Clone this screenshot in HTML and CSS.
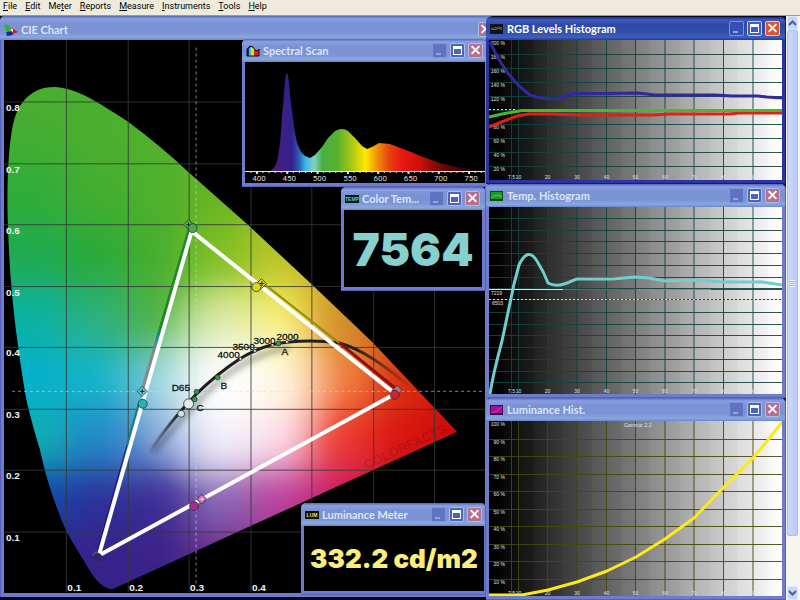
FILE: index.html
```html
<!DOCTYPE html>
<html lang="en">
<head>
<meta charset="utf-8">
<title>CIE Chart</title>
<link rel="stylesheet" href="styles.css">
</head>
<body>
<nav class="menubar">
  <button><u>F</u>ile</button>
  <button><u>E</u>dit</button>
  <button>Me<u>t</u>er</button>
  <button><u>R</u>eports</button>
  <button><u>M</u>easure</button>
  <button><u>I</u>nstruments</button>
  <button><u>T</u>ools</button>
  <button><u>H</u>elp</button>
</nav>

<div class="workspace">
  <main class="desktop">
    <div class="stage">
      <section class="window cie">
        <header class="titlebar">
          <svg class="icon" viewBox="0 0 14 12"><path d="M0 1Q4-1 7 4L9 7 2 7Z" fill="#3fae30"/><path d="M8 4L14 8 9 10Z" fill="#e01810"/><path d="M2 8L8 7 9 11 3 12Z" fill="#1c2890"/><path d="M6 6L9 5 9 8Z" fill="#fff"/></svg>
          <h2>CIE Chart</h2>
          <button class="ctl close" aria-label="Close"></button>
        </header>
        <svg class="plot" viewBox="4 40 482 553">
          <defs>
            <clipPath id="locus"><path d="M112 590C100 588 92 575 85 563L67 533C55 506 46 478 40 450C34 430 29 412 26 398C18 350 11 300 8.500 240C7 210 7 180 9 155C12 120 16 110 24 100C33 90 43 86 56 86.500C78 88 100 103 128 121C150 137 170 154 189 172L250 226 312 284 373 342 458 432Z"/></clipPath>
            <clipPath id="gamut"><path d="M192 229L99 557 396 394Z"/></clipPath>
            <filter id="blend" x="-20%" y="-20%" width="140%" height="140%" color-interpolation-filters="sRGB"><feGaussianBlur stdDeviation="19"/></filter>
            <filter id="soft" x="-20%" y="-20%" width="140%" height="140%"><feGaussianBlur stdDeviation="3"/></filter>
            <radialGradient id="glow" gradientUnits="userSpaceOnUse" cx="230" cy="388" r="115"><stop offset="0" stop-color="#fff" stop-opacity=".9"/><stop offset=".4" stop-color="#fff" stop-opacity=".45"/><stop offset="1" stop-color="#fff" stop-opacity="0"/></radialGradient>
            <linearGradient id="fade" gradientUnits="userSpaceOnUse" x1="148" y1="0" x2="410" y2="0"><stop offset="0" stop-color="#222" stop-opacity="0"/><stop offset=".12" stop-color="#1c1c1c"/><stop offset=".8" stop-color="#222"/><stop offset="1" stop-color="#311" stop-opacity=".1"/></linearGradient>
            <linearGradient id="edge" x1="0" y1="0" x2="0" y2="1"><stop offset="0" stop-color="#1f8a24"/><stop offset=".6" stop-color="#1f8a24"/><stop offset=".65" stop-color="#14888c"/><stop offset=".75" stop-color="#888"/><stop offset="1" stop-color="#889"/></linearGradient>
          </defs>
          <rect x="4" y="40" width="482" height="553" fill="#000"/>
          <g clip-path="url(#locus)">
            <g id="field" filter="url(#blend)"></g>
            <g clip-path="url(#gamut)"><circle cx="230" cy="388" r="115" fill="url(#glow)"/></g>
            <text class="watermark" transform="translate(367 470) rotate(-25)">COLORFACTS</text>
          </g>
          <g id="cie-grid" class="cie-grid"></g>
          <path class="cross" d="M196.500 47V586M12 391.500H486"/>
          <path d="M154 452Q175 426 200 400Q240 356 290 347" class="curve-shadow" filter="url(#soft)"/>
          <path d="M150 453C162 433 180 412 197 394C211 380 225 369 240 359C258 348 273 343 290 342C310 340 325 341 340 343C366 350 390 370 409 385" class="curve" stroke="url(#fade)"/>
          <path d="M188.500 229L141.500 390 143 392 191 231Z" fill="url(#edge)" stroke="url(#edge)"/>
          <path d="M139 404L127 446" fill="none" stroke="#128078" stroke-width="2"/>
          <path d="M127 446L98 550" fill="none" stroke="#1c1468"/>
          <path d="M266 285L340 343" stroke="#8c8c10" stroke-width="2"/><path d="M340 343L397 389" stroke="#8c1010" stroke-width="3"/>
          <path class="gamut" d="M192 231L99 556 396 394Z"/>
          <g class="marks">
            <path fill="#54b848" d="M189 219.500l5 5-5 5-5-5z"/><path d="M186.500 224.500h5m-2.500-2.500v5" stroke="#123"/>
            <circle cx="193" cy="228" r="4.500" fill="#4ca84e"/>
            <path fill="#e0d030" d="M262 278.500l5 5-5 5-5-5z"/><path d="M260 283.500h5m-2.500-2.500v5" stroke="#332"/>
            <circle cx="257" cy="287" r="4.500" fill="#ded51c"/>
            <path fill="#66d0d4" d="M142.500 386.500l5 5-5 5-5-5z"/><path d="M140 391.500h5m-2.500-2.500v5" stroke="#123"/>
            <circle cx="143" cy="404" r="4.500" fill="#23b5ae"/>
            <path fill="#d86068" d="M398 385.500l5 5-5 5-5-5z"/><circle cx="395.500" cy="395" r="4.500" fill="#d42030"/>
            <path fill="#c468b4" d="M202 494.500l5 5-5 5-5-5z"/><path d="M200 499.500h5m-2.500-2.500v5" stroke="#ecd"/>
            <circle cx="194.500" cy="506.500" r="4.500" fill="#a92a92"/>
            <path fill="#5a5aaa" fill-opacity=".6" stroke="#88a" stroke-dasharray="1 1" d="M96 551l4 4-4 4-4-4z"/><circle cx="98" cy="558" r="4" fill="#352070"/>
            <circle cx="189" cy="404" r="5" fill="#e8e8e8"/><circle cx="181.500" cy="414" r="3.500" fill="#ddd"/>
            <circle cx="197" cy="392" r="2.500" fill="#2fa32f"/><circle cx="195" cy="399.500" r="2.500" fill="#2fa32f"/><circle cx="218" cy="377.500" r="2.500" fill="#2fa32f"/><circle cx="279" cy="343.500" r="2.500" fill="#2fa32f"/>
            <circle cx="241" cy="359" r="1.500" fill="#eee"/><circle cx="255.500" cy="351" r="1.500" fill="#eee"/><circle cx="273" cy="345" r="1.500" fill="#eee"/><circle cx="287.500" cy="342" r="1.500" fill="#eee"/>
          </g>
          <g class="note"><text x="172" y="391">D65</text><text x="218" y="358">4000</text><text x="233" y="350">3500</text><text x="254" y="344">3000</text><text x="277" y="340">2000</text><text x="282" y="355">A</text><text x="221" y="389">B</text><text x="197" y="411">C</text></g>
        </svg>
      </section>

      <section class="window spectral">
        <header class="titlebar">
          <svg class="icon" viewBox="0 0 14 12"><path d="M1 11V4L4 1 6 1V11Z" fill="#1c2068"/><path d="M3 11V3L5 2V11Z" fill="#38c0e0"/><path d="M5 11V2L8 3V11Z" fill="#d8e020"/><path d="M8 11V5L11 6 13 5V11Z" fill="#e02010"/><path d="M1 11V4L4 1 7 2 9 5 11 6 13 4V11Z" fill="none" stroke="#111"/></svg>
          <h2>Spectral Scan</h2>
          <button class="ctl min" aria-label="Minimize"></button><button class="ctl max" aria-label="Maximize"></button><button class="ctl close" aria-label="Close"></button>
        </header>
        <svg class="plot" viewBox="0 0 240 121">
          <defs><linearGradient id="spectrum" gradientUnits="userSpaceOnUse" x1="25" y1="0" x2="235" y2="0">
            <stop offset="0" stop-color="#501870"/><stop offset=".06" stop-color="#3c2088"/><stop offset=".105" stop-color="#34208c"/><stop offset=".14" stop-color="#3060b8"/><stop offset=".17" stop-color="#38b8e8"/><stop offset=".21" stop-color="#88d0c0"/><stop offset=".25" stop-color="#48b040"/><stop offset=".32" stop-color="#58b030"/><stop offset=".4" stop-color="#b8cc10"/><stop offset=".455" stop-color="#ffea00"/><stop offset=".51" stop-color="#f09008"/><stop offset=".57" stop-color="#e84010"/><stop offset=".63" stop-color="#e81810"/><stop offset=".71" stop-color="#d01008"/><stop offset=".8" stop-color="#780808"/><stop offset="1" stop-color="#100000"/></linearGradient></defs>
          <rect width="240" height="121"/>
          <path fill="url(#spectrum)" d="M25 109C30 106 32 101 33 95C35 85 36 70 37 55C39 38 40 11 42 11C44 11 45 38 47 48L49 66 52 81 56 90 60 94 65 96 70 93 77 85 83 76 90 69Q97 65 103 69L110 76 117 84 122 87 127 85 134 81 145 82 158 87 166 90 175 94 195 101 212 105 235 109Z"/>
          <g id="spectral-axis" class="spectral-axis"></g>
        </svg>
      </section>

      <section class="window color-temp">
        <header class="titlebar">
          <svg class="icon" viewBox="0 0 14 12"><rect y="2" width="14" height="8" fill="#001418"/><text x="7" y="8" class="tiny tiny-temp">TEMP</text></svg>
          <h2>Color Tem...</h2>
          <button class="ctl min" aria-label="Minimize"></button><button class="ctl max" aria-label="Maximize"></button><button class="ctl close" aria-label="Close"></button>
        </header>
        <output class="reading temp">7564</output>
      </section>

      <section class="window lum-meter">
        <header class="titlebar">
          <svg class="icon" viewBox="0 0 14 12"><rect y="2" width="14" height="8" fill="#141000"/><text x="7" y="8" class="tiny tiny-lum">LUM</text></svg>
          <h2>Luminance Meter</h2>
          <button class="ctl min" aria-label="Minimize"></button><button class="ctl max" aria-label="Maximize"></button><button class="ctl close" aria-label="Close"></button>
        </header>
        <output class="reading lum">332.2 cd/m2</output>
      </section>
    </div>

    <div class="column">
      <section class="window active">
        <header class="titlebar">
          <svg class="icon" viewBox="0 0 14 12"><rect y="1" width="13" height="10" fill="#0c1420"/><path d="M1 5Q4 8 7 6T12 5" stroke="#38a030" fill="none"/><path d="M1 7Q6 2 12 7" stroke="#c03030" fill="none"/></svg>
          <h2>RGB Levels Histogram</h2>
          <button class="ctl min" aria-label="Minimize"></button><button class="ctl max" aria-label="Maximize"></button><button class="ctl close" aria-label="Close"></button>
        </header>
        <svg class="plot" viewBox="0 0 293 140">
          <defs><linearGradient id="ramp"><stop offset="0" stop-color="#000"/><stop offset=".1" stop-color="#101010"/><stop offset=".5" stop-color="#7a7a7a"/><stop offset=".8" stop-color="#cacaca"/><stop offset="1" stop-color="#fff"/></linearGradient></defs>
          <g data-steps></g><g class="grid" data-grid="14"></g>
          <path d="M0 69.500H28" stroke="#ddd" stroke-dasharray="2 2"/>
          <g data-labels="200,180,160,140,120,,80,60,40,20" data-step="14"></g>
          <path class="line blue" d="M1 2L9 18 18 32 29 45 41 55 51 58 66 59 74 57 84 53.500 118 53.500 149 53 166 55 226 55 243 56 269 56 278 57 293 58"/>
          <path class="line red" d="M0 87L10 83 28 76 40 74 62 74 90 75 165 75 180 74 240 74 250 73 293 73"/>
          <path class="line green" d="M0 77L13 74 33 70.500 293 70.500"/>
        </svg>
      </section>

      <section class="window">
        <header class="titlebar">
          <svg class="icon" viewBox="0 0 14 12"><rect y="1" width="13" height="10" fill="#0b4a12"/><rect x="1" y="2" width="11" height="7" fill="#1d9a28"/><path d="M1 8Q6 3 12 7" stroke="#4ddc50" fill="none"/></svg>
          <h2>Temp. Histogram</h2>
          <button class="ctl min" aria-label="Minimize"></button><button class="ctl max" aria-label="Maximize"></button><button class="ctl close" aria-label="Close"></button>
        </header>
        <svg class="plot" viewBox="0 1 293 187">
          <g data-steps></g><g class="grid" data-grid="11.75" data-skip="8"></g>
          <path d="M0 83.500H74" stroke="#ddd"/><path d="M74 83.500H148" stroke="#666"/><path d="M148 83.500H222" stroke="#888"/><path d="M222 83.500H293" stroke="#444"/>
          <path d="M0 93.500H293" stroke="#243c3c"/><path d="M0 93.500H293" stroke="#ddd" stroke-dasharray="2 2"/>
          <g class="label"><text x="2" y="89">7219</text><text x="3" y="99">6503</text></g>
          <g data-labels=""></g>
          <path class="line cyan" d="M1 188C4 168 9 150 13 135L25 78 30 59Q39 40 48 55Q55 66 59 77Q66 81 75 78C80 77 84 74 88 73L124 73 146 71 160 72 176 75 208 74 234 76 273 76 293 79"/>
        </svg>
      </section>

      <section class="window">
        <header class="titlebar">
          <svg class="icon" viewBox="0 0 14 12"><rect y="1" width="13" height="10" fill="#420848"/><rect x="1" y="2" width="11" height="7" fill="#a0109c"/><path d="M1 9Q8 8 12 3" stroke="#c840c0" fill="none"/></svg>
          <h2>Luminance Hist.</h2>
          <button class="ctl min" aria-label="Minimize"></button><button class="ctl max" aria-label="Maximize"></button><button class="ctl close" aria-label="Close"></button>
        </header>
        <svg class="plot" viewBox="0 0 293 175">
          <g data-steps></g><g class="grid olive" data-grid="17.5"></g>
          <g data-labels="100,90,80,70,60,50,40,30,20,10" data-step="17.5"></g>
          <text class="label" x="135" y="6">Gamma: 2.2</text>
          <path class="line yellow" d="M0 174L33 174 59 169 88 161 118 150 147 136 176 118 205 97 234 67 264 37 279 19 293 1"/>
        </svg>
      </section>
    </div>
  </main>

  <aside class="scrollbar">
    <button class="arrow" aria-label="Scroll up"><svg viewBox="0 0 9 6"><path d="M1 5L4.500 1.500 8 5"/></svg></button>
    <div class="thumb"><i></i></div>
    <button class="arrow" aria-label="Scroll down"><svg viewBox="0 0 9 6"><path d="M1 1L4.500 4.500 8 1"/></svg></button>
  </aside>
</div>
<script src="charts.js"></script>
</body>
</html>
```
FILE: styles.css
```css
* { box-sizing: border-box; }

body {
  margin: 0;
  height: 100vh;
  display: flex;
  flex-direction: column;
  overflow: hidden;
  background: #ece9d8;
  font-family: "Roboto", sans-serif;
}

button { font: inherit; padding: 0; border: 0; background: none; }

.menubar {
  display: flex;
  gap: 8px;
  height: 16px;
  padding: 0 3px 3px;
  align-items: center;
  background: #eeebdc;
  border-bottom: 1px solid #9a998e;
  font: 9px "Roboto", sans-serif;
  color: #111;
}

.menubar u { text-underline-offset: 1px; }

.workspace { flex: 1; min-height: 0; display: flex; }

.desktop {
  flex: 1;
  display: grid;
  grid-template-columns: 486fr 300fr;
  grid-template-rows: 100%;
  background: #08081c;
}

.stage { position: relative; min-width: 0; }

.column {
  display: grid;
  grid-template-rows: 167fr 214fr 202fr;
  position: relative;
  min-width: 0;
  padding-top: 1px;
}

.window {
  display: flex;
  flex-direction: column;
  min-width: 0;
  min-height: 0;
  padding: 0 3px 3px;
  background: #6f7cca;
  border: solid #5560b4;
  border-width: 0 1px 1px 0;
  border-radius: 5px 5px 0 0;
}

.window.active { background: #2b34a4; border-color: #16188a; }

.titlebar {
  flex: none;
  display: flex;
  align-items: center;
  gap: 3px;
  height: 23px;
  margin: 0 -3px;
  padding: 0 5px 0 4px;
  border-radius: 5px 5px 0 0;
  background: linear-gradient(#5566b8 0, #8ba0e0 12%, #7b92d4 30%, #7b94d4 70%, #88a8e0 88%, #6f86cc);
}

.active .titlebar { background: linear-gradient(#1c2890 0, #3f5cc0 12%, #3047a4 35%, #3350ac 70%, #3c62c0 88%, #24389c); }

.titlebar h2 {
  flex: 1;
  margin: 0;
  font: 700 11px "Lato", sans-serif;
  color: #dbe5fb;
  white-space: nowrap;
}

.active h2 { color: #fff; }

.icon { width: 14px; height: 12px; flex: none; }

.ctl {
  position: relative;
  width: 15px;
  height: 15px;
  flex: none;
  border: 1px solid #aebcec;
  border-radius: 2px;
  background: #4c64bc;
}

.ctl.min { background: #6072c2; border-color: #8192d8; }
.active .ctl { background: #3e5cc4; border-color: #c4d0f4; }
.active .ctl.min { background: #3450b4; border-color: #7f90d4; }
.ctl.close { background: #b4708c; }
.active .ctl.close { background: #dc5434; }

.ctl::before, .ctl::after { content: ""; position: absolute; }
.ctl.min::before { left: 3px; bottom: 2px; width: 5px; height: 2px; background: #96a5de; }
.ctl.max::before { inset: 2px; border: 1px solid #fff; border-top-width: 3px; }
.ctl.close::before, .ctl.close::after { left: 1px; top: 5px; width: 11px; height: 2px; background: #fff; transform: rotate(45deg); }
.ctl.close::after { transform: rotate(-45deg); }

.plot { display: block; flex: 1; min-height: 0; width: 100%; background: #000; }

.stage .window { position: absolute; }
.stage .cie { inset: 0 -2px 3px 0; padding: 0 3px 4px; border-width: 0 0 0 1px; }
.cie .titlebar { height: 24px; margin: 0 -9px 0 -4px; padding-top: 3px; padding-right: 1px; }
.stage .spectral { right: 0; top: 23px; width: 244px; height: 148px; padding: 0 1px 3px 3px; border-right: 0; }
.spectral .titlebar, .lum-meter .titlebar { margin-right: -1px; padding-right: 3px; }
.stage .color-temp { right: 0; top: 171px; width: 145px; height: 104px; }
.stage .lum-meter { right: 0; bottom: 5px; width: 185px; height: 92px; padding-right: 1px; }

.reading {
  flex: 1;
  display: flex;
  align-items: center;
  justify-content: center;
  background: #000;
  font-family: "Inter", sans-serif;
  font-weight: 900;
  line-height: 1;
  white-space: nowrap;
}

.reading.temp { font-size: 46px; color: #86d0cf; }
.reading.lum { font-size: 26px; color: #fbee7c; }

.tiny { font: bold 5px "Liberation Sans", sans-serif; text-anchor: middle; }
.tiny-temp { fill: #4fd0d8; }
.tiny-lum { fill: #f0e060; }

.cie-grid path { stroke: #333a36; stroke-opacity: .85; }
.cie-grid text { font: bold 10px "Liberation Sans", sans-serif; fill: #f2f2f2; }
.cross { stroke: #d8d8d8; stroke-opacity: .6; stroke-dasharray: 3 3; }
.curve { fill: none; stroke-width: 3; }
.curve-shadow { fill: none; stroke: #000; stroke-opacity: .35; stroke-width: 5; }
.gamut { fill: none; stroke: #fff; stroke-width: 4; stroke-linejoin: round; }
.marks circle, .marks path[fill] { stroke: #234; stroke-opacity: .8; }
.note text { font: 10px "Liberation Sans", sans-serif; fill: #111; stroke: #111; stroke-width: .3px; }
.watermark { font: bold 13px "Liberation Sans", sans-serif; fill: #5c0000; fill-opacity: .2; }

.spectral-axis path { stroke: #e8e8e8; }
.spectral-axis text { font: 8px "Roboto", sans-serif; fill: #d8d8d8; text-anchor: middle; }

.grid { stroke: #0f4440; stroke-opacity: .9; }
.grid.olive { stroke: #44480c; }
.label, .label text { font: 5px "Liberation Sans", sans-serif; fill: #e0e0e0; }
.line { fill: none; stroke-width: 3px; stroke-linejoin: round; }
.blue { stroke: #33289a; }
.red { stroke: #e02018; }
.green { stroke: #4cb828; }
.cyan { stroke: #6fcfcf; }
.yellow { stroke: #fbea18; }

.scrollbar {
  flex: none;
  width: 14px;
  display: flex;
  flex-direction: column;
  padding: 0 2px 0 1px;
  background: #f6f5f0;
}

.arrow { height: 14px; display: grid; place-items: center; background: #c6d5fa; border: 1px solid #dfe8fd; border-radius: 2px; }
.arrow svg { width: 9px; height: 6px; fill: none; stroke: #4a6186; stroke-width: 2; }
.thumb { flex: 507; display: grid; place-items: center; background: linear-gradient(90deg, #cad8fc, #bccbf6); border: 1px solid #a9bdf0; border-radius: 2px; }
.thumb + .arrow { margin-top: 50px; }
.thumb i { width: 5px; height: 7px; background: repeating-linear-gradient(#eef4fe 0 1px, #9fb2e4 1px 2px); }
```
FILE: charts.js
```js
const NS = "http://www.w3.org/2000/svg";

function add(parent, name, attrs, text) {
  const el = document.createElementNS(NS, name);
  for (const key in attrs) el.setAttribute(key, attrs[key]);
  if (text) el.textContent = text;
  parent.append(el);
  return el;
}

// Chromaticity colours, one row per 0.1 step of y from the top, one entry per 0.1 step of x.
const field = document.getElementById("field");
[
  "4bae30 4bae30 4eb02e 60b428 80ba20 a0c020 a0c020 a0c020",
  "44ae32 4aae2f 52b02c 66b226 88bc20 a0c020 a0c020 a0c020",
  "2eac3a 44ae30 4cb02d 68b424 92c01c b0c020 b0a020 b08020",
  "20ab50 28aa38 48ae2e 80c024 bcc428 c8a828 c88020 c06010",
  "0cb2a4 2cb080 50b244 cce080 f8ec58 d09028 d06010 c04010",
  "04b0cc 14b4cc 78c8d4 f0f6f0 fff2c8 f28444 d83010 d00c08",
  "10b0b0 2088c8 6c90d0 e8e4f8 fccce0 ec3a30 d81410 cc0808",
  "1048b0 2c3098 3c2c94 8868b4 b8409c cc1868 cc1030 cc0810",
  "30228c 37228a 3a2288 68288c 982c8c b82070 b82060 b82060"
].forEach((row, j) => row.split(" ").forEach((c, i) => {
  add(field, "rect", { x: 4 + i * 61.5 - (i ? 0 : 80), y: 40.5 + j * 61.5, width: i ? 63 : 143, height: j === 8 ? 120 : 63, fill: "#" + c });
}));

const grid = document.getElementById("cie-grid");
for (let i = 1; i <= 7; i++) {
  const x = Math.round(4.5 + i * 61.5) + 0.5;
  add(grid, "path", { d: `M${x} 40V593` });
  if (i < 5) add(grid, "text", { x: x + 1, y: 592 }, "0." + i);
}
for (let i = 1; i <= 8; i++) {
  const y = Math.round(593 - i * 61.5) + 0.5;
  add(grid, "path", { d: `M4 ${y}H486` });
  add(grid, "text", { x: 6, y: y + 9 }, "0." + i);
}

const axis = document.getElementById("spectral-axis");
add(axis, "path", { d: "M0 109.5H240" });
for (let nm = 390; nm <= 770; nm += 10) {
  const x = 12 + (nm - 400) * 0.606;
  const major = nm % 50 === 0;
  add(axis, "path", { d: `M${x} 109V${major ? 112 : 111}`, "stroke-width": major ? 2 : 1 });
  if (major) add(axis, "text", { x: x + 2, y: 119 }, String(nm));
}

const columns = [22.5, 29.5, 58.5, 88, 117.5, 146.5, 176, 205, 234.5, 264];
document.querySelectorAll("[data-steps]").forEach(g => {
  add(g, "rect", { width: 293, height: 190, fill: "url(#ramp)" });
  for (let i = 0; i < 20; i++) {
    const v = Math.round(255 * i / 19);
    add(g, "rect", { x: i * 14.65, width: 14.65, height: 190, fill: `rgb(${v},${v},${v})`, opacity: 0.35 });
  }
});
document.querySelectorAll("[data-grid]").forEach(g => {
  const step = +g.dataset.grid;
  const height = 1 * g.ownerSVGElement.viewBox.baseVal.height + g.ownerSVGElement.viewBox.baseVal.y;
  columns.forEach(x => add(g, "path", { d: `M${x} 0V${height}` }));
  for (let i = 1; i * step < height; i++) {
    if (i !== +g.dataset.skip) add(g, "path", { d: `M0 ${Math.round(i * step) + 0.5}H293` });
  }
});
document.querySelectorAll("[data-labels]").forEach(g => {
  const box = g.ownerSVGElement.viewBox.baseVal;
  g.setAttribute("class", "label");
  g.dataset.labels.split(",").forEach((t, i) => {
    if (t) add(g, "text", { x: 16, y: 5 + i * g.dataset.step, "text-anchor": "end" }, t + " %");
  });
  ["7.5", "10", "20", "30", "40", "50", "60", "70", "80", "90"].forEach((t, i) => {
    add(g, "text", { x: columns[i], y: box.y + box.height - 1, "text-anchor": "middle" }, t);
  });
});
```
